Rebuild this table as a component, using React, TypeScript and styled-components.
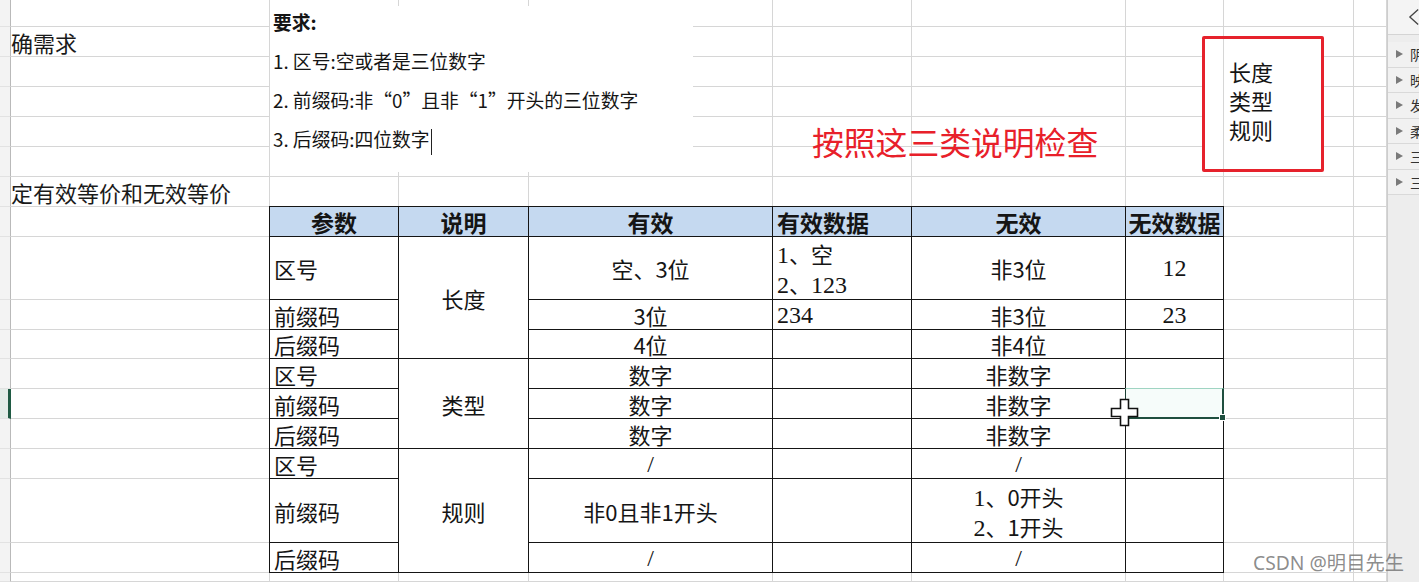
import React from 'react';
import styled, { createGlobalStyle } from 'styled-components';

const GlobalStyle = createGlobalStyle`
  html, body { margin: 0; padding: 0; background: #fff; }
  body {
    font-family: "Noto Sans CJK SC", "Noto Sans", sans-serif;
    overflow: hidden;
  }
`;

const COLS = [11, 259, 129, 130, 244, 139, 214, 98, 130, 33];
const ROWS = [27, 30, 30, 30, 30, 30, 30, 30, 63, 30, 29, 30, 30, 30, 30, 64, 30, 9];

const Page = styled.div`
  position: relative;
  width: 1419px;
  height: 582px;
  display: flex;
  overflow: hidden;
  background: #fff;
`;

const Sheet = styled.div`
  display: grid;
  grid-template-columns: ${COLS.map((c) => `${c}px`).join(' ')};
  grid-template-rows: ${ROWS.map((r) => `${r}px`).join(' ')};
  width: 1387px;
  height: 582px;
  flex: none;
`;

const RowHead = styled.div<{ $r: number; $active?: boolean }>`
  grid-column: 1;
  grid-row: ${(p) => p.$r};
  background: ${(p) => (p.$active ? '#e4ece8' : '#f3f3f3')};
  border-bottom: 1px solid #e2e2e2;
  border-right: ${(p) => (p.$active ? '3px solid #1f5a43' : '1px solid #b9b9b9')};
  box-sizing: border-box;
`;

const Cell = styled.div<{ $r: number; $c: number }>`
  grid-row: ${(p) => p.$r};
  grid-column: ${(p) => p.$c};
  border-right: 1px solid #d6d6d6;
  border-bottom: 1px solid #d6d6d6;
  box-sizing: border-box;
  min-width: 0;
  display: flex;
  align-items: center;
  font-size: 22px;
  line-height: 30px;
  color: #1a1a1a;
  white-space: nowrap;
`;

const TCell = styled.div<{ $r: number; $c: number; $rs?: number; $left?: boolean; $head?: boolean }>`
  grid-row: ${(p) => (p.$rs ? `${p.$r} / span ${p.$rs}` : `${p.$r}`)};
  grid-column: ${(p) => p.$c};
  margin: -1px 0 0 -1px;
  border: 1px solid #151515;
  background: ${(p) => (p.$head ? '#c5d9f0' : '#fff')};
  display: flex;
  flex-direction: column;
  justify-content: center;
  align-items: ${(p) => (p.$left ? 'flex-start' : 'center')};
  padding: ${(p) => (p.$left ? '0 0 0 4px' : '0')};
  font-size: ${(p) => (p.$head ? '23px' : '22px')};
  font-weight: ${(p) => (p.$head ? 700 : 400)};
  line-height: 30px;
  color: #151515;
  white-space: nowrap;
  box-sizing: border-box;
  min-width: 0;
  min-height: 0;
  overflow: visible;
`;

const Serif = styled.span`
  font-family: "Liberation Serif", "Noto Sans CJK SC", serif;
  font-size: 24px;
  line-height: 1;
`;

const Line = styled.div`
  height: 30px;
  line-height: 30px;
`;

const Selection = styled.div`
  grid-row: 13;
  grid-column: 8;
  position: relative;
  margin: -1px 0 0 -1px;
  border-top: 1px solid #9fd4c2;
  border-left: 1px solid #1c3f33;
  border-right: 2px solid #1f4f3f;
  border-bottom: 2px solid #1f4f3f;
  background: rgba(230, 246, 240, 0.35);
  box-sizing: border-box;
`;

const FillHandle = styled.span`
  position: absolute;
  right: -4px;
  bottom: -4px;
  width: 5px;
  height: 5px;
  background: #1f4f3f;
  border: 1px solid #fff;
`;

const NoteBox = styled.div`
  position: absolute;
  left: 270px;
  top: 6px;
  width: 423px;
  height: 166px;
  background: #fff;
  padding: 0 3px;
  box-sizing: border-box;
  font-size: 18.8px;
  color: #151515;
`;

const NoteTitle = styled.div`
  font-weight: 700;
  line-height: 32px;
  margin-bottom: 3px;
`;

const NoteLine = styled.div`
  line-height: 39px;
  white-space: nowrap;
`;

const Caret = styled.span`
  display: inline-block;
  width: 1px;
  height: 26px;
  background: #222;
  vertical-align: middle;
  margin-left: 1px;
`;

const RedFrame = styled.div`
  position: absolute;
  left: 1202px;
  top: 36px;
  width: 122px;
  height: 136px;
  border: 3px solid #e6222c;
  border-radius: 2px;
  box-sizing: border-box;
  background: linear-gradient(to right, transparent 18px, #d6d6d6 18px, #d6d6d6 19px, transparent 19px), #fff;
  padding: 18px 0 0 24px;
  font-size: 22px;
  line-height: 29px;
  color: #151515;
`;

const RedNote = styled.div`
  position: absolute;
  left: 812px;
  top: 120px;
  font-size: 31.8px;
  line-height: 42px;
  color: #e8202a;
  white-space: nowrap;
`;

const CursorMark = styled.svg`
  position: absolute;
  left: 1110px;
  top: 398px;
`;

const Watermark = styled.div`
  position: absolute;
  left: 1253px;
  top: 550px;
  font-family: "Noto Sans", "Noto Sans CJK SC", sans-serif;
  font-size: 19.3px;
  line-height: 26px;
  color: rgba(120, 120, 120, 0.85);
  white-space: nowrap;
`;

const SidePanel = styled.div`
  width: 32px;
  flex: none;
  background: #ededed;
  border-left: 1px solid #cdcdcd;
  box-sizing: border-box;
  display: flex;
  flex-direction: column;
  overflow: hidden;
`;

const PanelTop = styled.div`
  height: 35px;
  flex: none;
  display: flex;
  align-items: center;
  padding-left: 21px;
  background: #f4f4f4;
  border-bottom: 1px solid #d4d4d4;
  box-sizing: border-box;
`;

const PanelGap = styled.div`
  height: 7px;
  flex: none;
`;

const PanelItem = styled.div`
  height: 25.5px;
  flex: none;
  display: flex;
  align-items: center;
  gap: 7px;
  padding-left: 8px;
  background: #f1f1f1;
  border-bottom: 1px solid #d9d9d9;
  box-sizing: border-box;
  font-size: 14px;
  color: #333;
  white-space: nowrap;
`;

const Tri = styled.span`
  flex: none;
  width: 0;
  height: 0;
  border-left: 7px solid #7a7a7a;
  border-top: 4px solid transparent;
  border-bottom: 4px solid transparent;
`;

const inTable = (r: number, c: number) => r >= 8 && r <= 17 && c >= 3 && c <= 8;

type BodyRow = {
  r: number;
  param: string;
  valid: React.ReactNode;
  validData?: React.ReactNode;
  invalid: React.ReactNode;
  invalidData?: React.ReactNode;
};

const BODY: BodyRow[] = [
  {
    r: 9,
    param: '区号',
    valid: '空、3位',
    validData: (
      <>
        <Line>
          <Serif>1</Serif>、空
        </Line>
        <Line>
          <Serif>2</Serif>、<Serif>123</Serif>
        </Line>
      </>
    ),
    invalid: '非3位',
    invalidData: <Serif>12</Serif>,
  },
  { r: 10, param: '前缀码', valid: '3位', validData: <Serif>234</Serif>, invalid: '非3位', invalidData: <Serif>23</Serif> },
  { r: 11, param: '后缀码', valid: '4位', invalid: '非4位' },
  { r: 12, param: '区号', valid: '数字', invalid: '非数字' },
  { r: 13, param: '前缀码', valid: '数字', invalid: '非数字' },
  { r: 14, param: '后缀码', valid: '数字', invalid: '非数字' },
  { r: 15, param: '区号', valid: <Serif>/</Serif>, invalid: <Serif>/</Serif> },
  {
    r: 16,
    param: '前缀码',
    valid: '非0且非1开头',
    invalid: (
      <>
        <Line>
          <Serif>1</Serif>、0开头
        </Line>
        <Line>
          <Serif>2</Serif>、1开头
        </Line>
      </>
    ),
  },
  { r: 17, param: '后缀码', valid: <Serif>/</Serif>, invalid: <Serif>/</Serif> },
];

const GROUPS = [
  { r: 9, label: '长度' },
  { r: 12, label: '类型' },
  { r: 15, label: '规则' },
];

const HEADERS: { c: number; label: string; left?: boolean }[] = [
  { c: 3, label: '参数' },
  { c: 4, label: '说明' },
  { c: 5, label: '有效' },
  { c: 6, label: '有效数据', left: true },
  { c: 7, label: '无效' },
  { c: 8, label: '无效数据' },
];

const SIDE_ITEMS = ['阴影', '映像', '发光', '柔化边缘', '三维格式', '三维旋转'];

const TEXT_A: Record<number, string> = {
  2: '确需求',
  7: '定有效等价和无效等价',
};

export default function App() {
  const bg: React.ReactNode[] = [];
  ROWS.forEach((_, i) => {
    const r = i + 1;
    bg.push(<RowHead key={`h${r}`} $r={r} $active={r === 13} />);
    for (let c = 2; c <= COLS.length; c++) {
      if (inTable(r, c)) continue;
      bg.push(
        <Cell key={`c${r}-${c}`} $r={r} $c={c}>
          {c === 2 ? TEXT_A[r] : null}
        </Cell>
      );
    }
  });

  return (
    <>
      <GlobalStyle />
      <Page>
        <Sheet>
          {bg}
          {HEADERS.map((h) => (
            <TCell key={`th${h.c}`} $r={8} $c={h.c} $head $left={h.left}>
              {h.label}
            </TCell>
          ))}
          {BODY.map((row) => (
            <React.Fragment key={`row${row.r}`}>
              <TCell $r={row.r} $c={3} $left>
                {row.param}
              </TCell>
              <TCell $r={row.r} $c={5}>
                {row.valid}
              </TCell>
              <TCell $r={row.r} $c={6} $left>
                {row.validData}
              </TCell>
              <TCell $r={row.r} $c={7}>
                {row.invalid}
              </TCell>
              <TCell $r={row.r} $c={8}>
                {row.invalidData}
              </TCell>
            </React.Fragment>
          ))}
          {GROUPS.map((g) => (
            <TCell key={`g${g.r}`} $r={g.r} $rs={3} $c={4}>
              {g.label}
            </TCell>
          ))}
          <Selection>
            <FillHandle />
          </Selection>
        </Sheet>

        <SidePanel>
          <PanelTop>
            <svg width="12" height="20" viewBox="0 0 12 20">
              <polyline points="11,1 1,10 11,19" fill="none" stroke="#444" strokeWidth="1.6" strokeLinejoin="round" />
            </svg>
          </PanelTop>
          <PanelGap />
          {SIDE_ITEMS.map((t, i) => (
            <PanelItem key={i}>
              <Tri />
              {t}
            </PanelItem>
          ))}
        </SidePanel>

        <NoteBox>
          <NoteTitle>要求:</NoteTitle>
          <NoteLine>1. 区号:空或者是三位数字</NoteLine>
          <NoteLine>2. 前缀码:非“0”且非“1”开头的三位数字</NoteLine>
          <NoteLine>
            3. 后缀码:四位数字
            <Caret />
          </NoteLine>
        </NoteBox>

        <RedFrame>
          <div>长度</div>
          <div>类型</div>
          <div>规则</div>
        </RedFrame>

        <RedNote>按照这三类说明检查</RedNote>

        <CursorMark width="30" height="30" viewBox="0 0 30 30">
          <path
            d="M10.5 1.5 H18.5 V10.5 H27.5 V18.5 H18.5 V27.5 H10.5 V18.5 H1.5 V10.5 H10.5 Z"
            fill="#fff"
            stroke="#111"
            strokeWidth="1.6"
          />
        </CursorMark>

        <Watermark>CSDN @明目先生</Watermark>
      </Page>
    </>
  );
}
